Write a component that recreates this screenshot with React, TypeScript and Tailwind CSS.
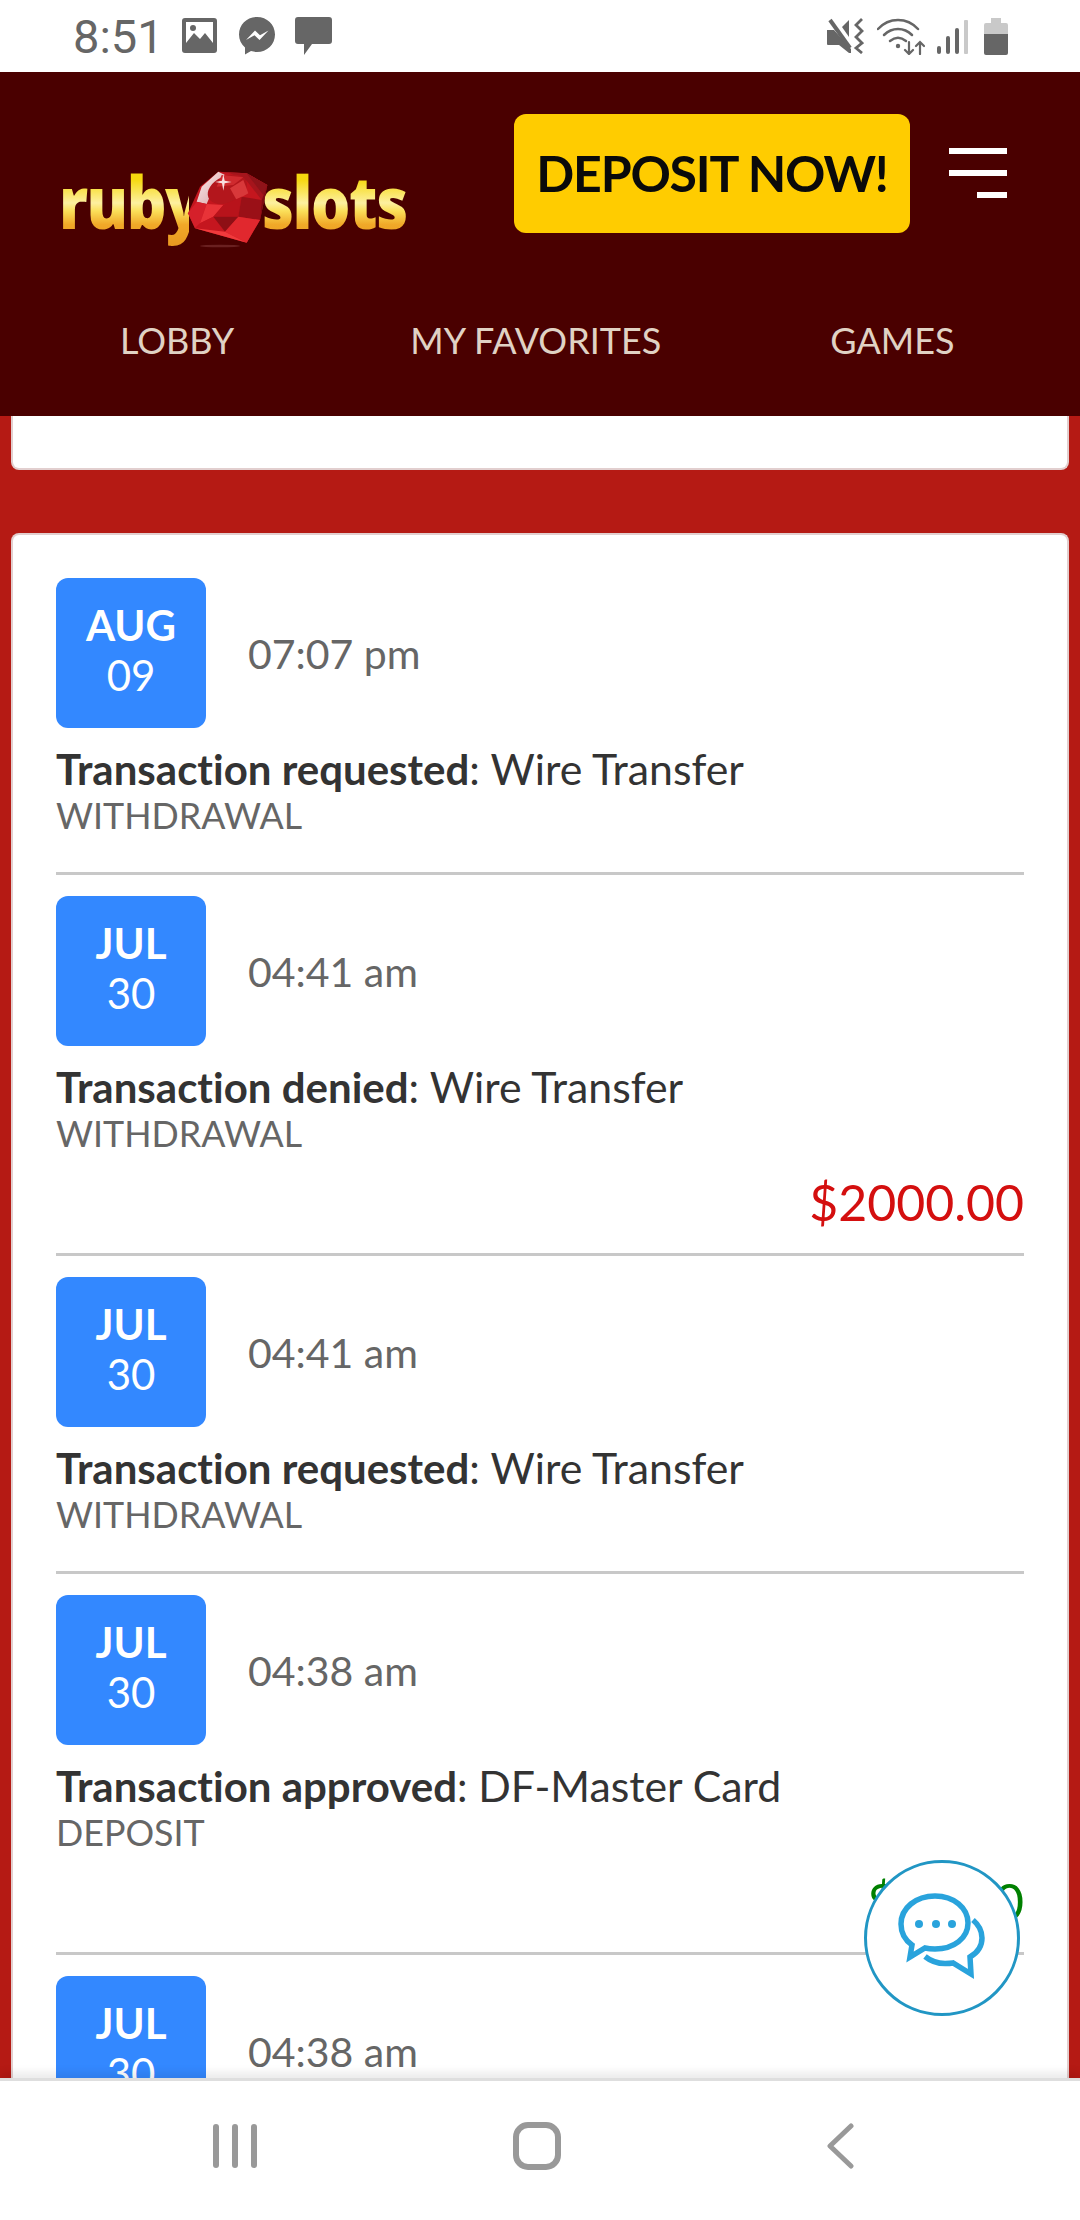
const rows = [
  { m: "AUG", d: "09", t: "07:07 pm", title: "Transaction requested", method: "Wire Transfer", kind: "WITHDRAWAL" },
  { m: "JUL", d: "30", t: "04:41 am", title: "Transaction denied", method: "Wire Transfer", kind: "WITHDRAWAL", amount: "$2000.00", color: "text-[#d40f0f]" },
  { m: "JUL", d: "30", t: "04:41 am", title: "Transaction requested", method: "Wire Transfer", kind: "WITHDRAWAL" },
  { m: "JUL", d: "30", t: "04:38 am", title: "Transaction approved", method: "DF-Master Card", kind: "DEPOSIT", amount: "$50.00", color: "text-[#008000]" },
];

function Ruby() {
  return (
    <svg viewBox="0 0 300 270" className="relative z-10 w-[100px] h-[90px] shrink-0 -ml-[9px] -mr-[18px]">
      <defs>
        <linearGradient id="rw" x1="0" y1="0" x2="1" y2="1">
          <stop offset="0" stopColor="#fbeeee" />
          <stop offset="1" stopColor="#d9a0a2" />
        </linearGradient>
      </defs>
      <ellipse cx="120" cy="258" rx="60" ry="4" fill="#6a2020" />
      <polygon points="24,160 60,80 115,35 200,40 262,75 240,180 200,248 45,205" fill="#c4161e" />
      <polygon points="115,35 200,40 262,75 245,120 200,62 150,40" fill="#a5151c" />
      <polygon points="200,40 262,75 250,105 215,60" fill="#8f1319" />
      <polygon points="50,125 65,80 115,35 135,45 100,85 80,132" fill="url(#rw)" />
      <ellipse cx="142" cy="88" rx="62" ry="40" transform="rotate(-24 142 88)" fill="#b3161c" />
      <polygon points="125,45 190,52 160,75 110,80" fill="#cf2a2e" />
      <polygon points="190,60 205,100 170,120 150,85" fill="#d8383a" />
      <polygon points="24,160 50,125 80,132 60,190 45,205" fill="#d5202a" />
      <polygon points="80,132 130,135 100,170 60,190" fill="#e83338" />
      <polygon points="130,135 185,110 175,170 100,170" fill="#b8131b" />
      <polygon points="185,110 245,120 240,180 175,170" fill="#9a1017" />
      <polygon points="245,120 262,75 240,180" fill="#7d0d13" />
      <polygon points="60,190 100,170 135,215 45,205" fill="#c5161f" />
      <polygon points="100,170 175,170 135,215" fill="#8e0f15" />
      <polygon points="175,170 240,180 200,248 135,215" fill="#e1282e" />
      <polygon points="135,215 200,248 45,205" fill="#f03a3c" />
      <path d="M130 42L134 62L155 66L134 70L130 92L126 70L105 66L126 62Z" fill="#fff" opacity="0.85" />
    </svg>
  );
}

function LogoWord({ children, width }: { children: string; width: string }) {
  return (
    <span className={`${width} shrink-0 inline-block mb-[8px] scale-y-[1.17] bg-[linear-gradient(180deg,#f6d80f_28%,#fdf0a0_52%,#fbe05a_60%,#f0a828_74%,#e8951f_100%)] bg-clip-text text-transparent font-['Open_Sans',sans-serif] font-extrabold text-[62px] leading-[84px] tracking-[-1.500px]`}>
      {children}
    </span>
  );
}

function StatusLeft() {
  return (
    <div className="flex items-center">
      <span className="font-['Roboto',sans-serif] text-[47px] leading-none text-[#666] ml-[73px] w-[109px]">8:51</span>
      <svg viewBox="0 0 36 36" className="w-[36px] h-[36px]">
        <rect x="0" y="0" width="35" height="35" rx="3" fill="#666" />
        <rect x="4" y="4" width="27" height="27" fill="#fff" />
        <path d="M4 25 L12 15 L18 21 L23 15 L31 25 V31 H4 Z" fill="#666" />
        <circle cx="11" cy="10" r="3" fill="#666" />
      </svg>
      <svg viewBox="0 0 36 38" className="w-[36px] h-[38px] ml-[21px]">
        <path d="M18 0C8 0 0 7.500 0 17.500c0 5.300 2.200 9.800 6 13v7l6-3.400c2 .6 4 .9 6 .9 10 0 18-7.500 18-17.500S28 0 18 0z" fill="#666" />
        <path d="M7 23l9-9.500 5 4.800 8.500-4.800-9 9.500-5-4.800z" fill="#fff" />
      </svg>
      <svg viewBox="0 0 37 38" className="w-[37px] h-[38px] ml-[20px]">
        <path d="M3 0H34a3 3 0 0 1 3 3V24a3 3 0 0 1-3 3H17L9 38V27H3a3 3 0 0 1-3-3V3a3 3 0 0 1 3-3z" fill="#666" />
      </svg>
    </div>
  );
}

function StatusRight() {
  return (
    <div className="flex items-center mr-[72px]">
      <svg viewBox="0 0 37 36" className="w-[37px] h-[36px]">
        <path d="M0 12H7L24 31V35H22L12 27H1a1 1 0 0 1-1-1Z" fill="#666" />
        <path d="M3 2 L23 30" stroke="#666" strokeWidth="4" />
        <path d="M15 9 L22 2 V19Z" fill="#666" />
        <path d="M35 1 L29 7 L35 13 L29 19 L35 25 L29 30 L35 35" fill="none" stroke="#666" strokeWidth="2.800" />
      </svg>
      <svg viewBox="0 0 48 37" className="w-[48px] h-[37px] ml-[13px]" fill="none" stroke="#666" strokeWidth="2.500" strokeLinecap="round">
        <path d="M1 11C12 -1 30 -1 41 11" />
        <path d="M7 17C15 9 27 9 35 17" />
        <path d="M13 23C18 19 24 19 29 23" />
        <circle cx="21" cy="28" r="2.200" fill="#666" stroke="none" />
        <path d="M32 24V36M28 32L32 36L36 32" strokeWidth="2.200" />
        <path d="M43 36V24M39 28L43 24L47 28" strokeWidth="2.200" />
      </svg>
      <svg viewBox="0 0 32 36" className="w-[32px] h-[36px] ml-[12px]">
        <rect x="0" y="28" width="4" height="8" rx="2" fill="#666" />
        <rect x="9" y="18" width="4" height="18" rx="2" fill="#666" />
        <rect x="18" y="10" width="4" height="26" rx="2" fill="#666" />
        <rect x="27" y="2" width="4" height="34" rx="1" fill="#c9c9c9" />
      </svg>
      <svg viewBox="0 0 24 37" className="w-[24px] h-[37px] ml-[15px]">
        <path d="M7 0H17V5H22a2 2 0 0 1 2 2V16H0V7a2 2 0 0 1 2-2H7Z" fill="#c9c9c9" />
        <path d="M0 16H24V35a2 2 0 0 1-2 2H2a2 2 0 0 1-2-2Z" fill="#666" />
      </svg>
    </div>
  );
}

function ChatIcon() {
  return (
    <svg viewBox="0 0 90 90" className="w-[90px] h-[90px]" fill="none">
      <path d="M38 3C19 3 4 15 4 31c0 9 4 16 11 21l-2 12 15-9c3 .7 6 1 10 1 19 0 33-11 33-26S57 3 38 3z" stroke="#29a3dc" strokeWidth="5.500" />
      <circle cx="22" cy="31" r="4" fill="#29a3dc" />
      <circle cx="39" cy="31" r="4" fill="#29a3dc" />
      <circle cx="55" cy="31" r="4" fill="#29a3dc" />
      <path d="M76 27c6 5 9 11 9 18 0 9-5 15-12 19l1 17-18-11c-3 .5-5 .5-8 .5-8 0-15-3-20-7" stroke="#29a3dc" strokeWidth="5.500" />
    </svg>
  );
}

function EntryHead({ m, d, t }: { m: string; d: string; t: string }) {
  return (
    <div className="flex items-center">
      <div className="w-[150px] h-[150px] rounded-[12px] bg-[#3388ff] text-white flex flex-col items-center justify-center">
        <span className="font-bold text-[42px] leading-[50px] -mt-[6px]">{m}</span>
        <span className="text-[42px] leading-[50px]">{d}</span>
      </div>
      <span className="ml-[42px] text-[41px] text-[#666] mt-[2px]">{t}</span>
    </div>
  );
}

function Entry({ m, d, t, title, method, kind }: { m: string; d: string; t: string; title: string; method: string; kind: string }) {
  return (
    <div>
      <EntryHead m={m} d={d} t={t} />
      <div className="mt-[17px] text-[42px] leading-[48px] text-[#333]">
        <b className="font-bold">{title}</b>: <span className="text-[42.800px]">{method}</span>
      </div>
      <div className="mt-[1px] text-[35.800px] leading-[44px] text-[#666]">{kind}</div>
    </div>
  );
}

export default function App() {
  return (
    <div className="relative h-[2220px] w-[1080px] flex flex-col overflow-hidden bg-white font-['Lato',sans-serif] [font-variant-ligatures:none]">
      <div className="h-[72px] shrink-0 bg-white flex items-center justify-between">
        <StatusLeft />
        <StatusRight />
      </div>

      <header className="h-[344px] shrink-0 bg-[#4a0000] flex flex-col">
        <div className="flex items-start h-[246px]">
          <div className="flex items-center ml-[59px] mt-[88px] h-[90px] w-[455px]">
            <LogoWord width="w-[130px]">ruby</LogoWord>
            <Ruby />
            <LogoWord width="w-[146px]">slots</LogoWord>
          </div>
          <button className="mt-[42px] h-[119px] w-[396px] rounded-[12px] bg-[#ffcc00] text-[#0a0a0a] font-bold text-[50px] tracking-[-1.200px] flex items-center justify-center">
            DEPOSIT NOW!
          </button>
          <div className="mt-[76px] ml-[39px] w-[58px] flex flex-col items-end gap-[16px]">
            <div className="h-[6px] w-[58px] bg-white" />
            <div className="h-[6px] w-[58px] bg-white" />
            <div className="h-[6px] w-[30px] bg-white" />
          </div>
        </div>
        <nav className="flex text-[#e0d2c4] text-[36px] leading-[44px]">
          <span className="ml-[120px]">LOBBY</span>
          <span className="ml-[176px]">MY FAVORITES</span>
          <span className="ml-[169px]">GAMES</span>
        </nav>
      </header>

      <main className="flex-1 min-h-0 overflow-hidden bg-[#b51a14] px-[11px]">
        <div className="h-[54px] bg-white border-2 border-t-0 border-[#e2cfcf] rounded-b-[8px]" />
        <div className="mt-[63px] bg-white border-2 border-b-0 border-[#e2cfcf] rounded-t-[8px] px-[43px] pt-[43px]">
          {rows.map((r, i) => (
            <div key={i} className={`border-b-[3px] border-[#c8c8c8] mb-[21px] ${r.amount ? "pb-[20px]" : "pb-[34px]"}`}>
              <Entry {...r} />
              {r.amount && <div className={`mt-[15px] text-right text-[50px] leading-[62px] ${r.color}`}>{r.amount}</div>}
            </div>
          ))}
          <EntryHead m="JUL" d="30" t="04:38 am" />
        </div>
      </main>

      <div className="relative h-[142px] shrink-0 bg-white border-t-[3px] border-[#dedede] shadow-[0_-6px_8px_rgba(0,0,0,0.08)] flex items-center pb-[10px]">
        <div className="flex gap-[13px] ml-[213px]">
          <div className="w-[6px] h-[44px] rounded-full bg-[#999]" />
          <div className="w-[6px] h-[44px] rounded-full bg-[#999]" />
          <div className="w-[6px] h-[44px] rounded-full bg-[#999]" />
        </div>
        <div className="ml-[256px] w-[48px] h-[48px] rounded-[15px] border-[6px] border-[#999]" />
        <svg viewBox="0 0 28 46" className="ml-[265px] w-[28px] h-[46px]" fill="none">
          <path d="M25 3L4 23L25 43" stroke="#999" strokeWidth="5" strokeLinecap="round" strokeLinejoin="round" />
        </svg>
      </div>

      <button className="absolute left-[864px] top-[1860px] w-[156px] h-[156px] rounded-full bg-white border-[3px] border-[#2196c4] flex items-center justify-center">
        <ChatIcon />
      </button>
    </div>
  );
}
